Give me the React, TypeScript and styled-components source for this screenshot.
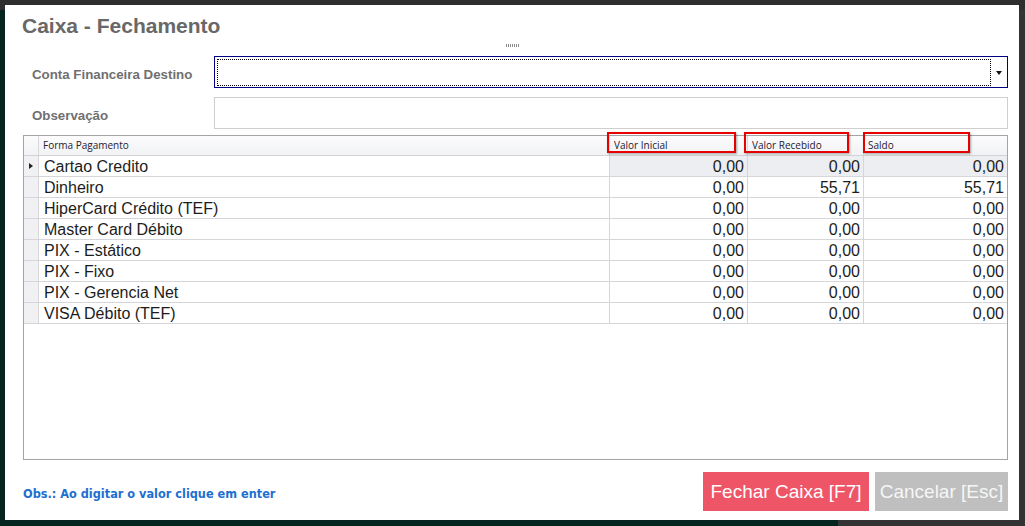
import React from "react";
import styled, { createGlobalStyle } from "styled-components";

type Row = {
  forma: string;
  inicial: string;
  recebido: string;
  saldo: string;
};

const rows: Row[] = [
  { forma: "Cartao Credito", inicial: "0,00", recebido: "0,00", saldo: "0,00" },
  { forma: "Dinheiro", inicial: "0,00", recebido: "55,71", saldo: "55,71" },
  { forma: "HiperCard Crédito (TEF)", inicial: "0,00", recebido: "0,00", saldo: "0,00" },
  { forma: "Master Card Débito", inicial: "0,00", recebido: "0,00", saldo: "0,00" },
  { forma: "PIX - Estático", inicial: "0,00", recebido: "0,00", saldo: "0,00" },
  { forma: "PIX - Fixo", inicial: "0,00", recebido: "0,00", saldo: "0,00" },
  { forma: "PIX - Gerencia Net", inicial: "0,00", recebido: "0,00", saldo: "0,00" },
  { forma: "VISA Débito (TEF)", inicial: "0,00", recebido: "0,00", saldo: "0,00" }
];

export default function App() {
  return (
    <>
      <GlobalStyle />
      <Dialog>
        <Title>Caixa - Fechamento</Title>
        <Gripper />
        <Form>
          <FieldRow>
            <Label>Conta Financeira Destino</Label>
            <Combo>
              <FocusRect />
              <Arrow />
            </Combo>
          </FieldRow>
          <FieldRow>
            <Label>Observação</Label>
            <TextBox />
          </FieldRow>
        </Form>
        <Grid>
          <HeaderRow>
            <HeaderCell />
            <HeaderCell>Forma Pagamento</HeaderCell>
            <HeaderCell>
              Valor Inicial
              <Mark $left={-3} $width={129} />
            </HeaderCell>
            <HeaderCell>
              Valor Recebido
              <Mark $left={-4} $width={105} />
            </HeaderCell>
            <HeaderCell>
              Saldo
              <Mark $left={-1} $width={107} />
            </HeaderCell>
          </HeaderRow>
          {rows.map((r, i) => (
            <DataRow key={r.forma}>
              <Indicator>{i === 0 && <Caret />}</Indicator>
              <Cell>{r.forma}</Cell>
              <NumCell $selected={i === 0}>{r.inicial}</NumCell>
              <NumCell $selected={i === 0}>{r.recebido}</NumCell>
              <NumCell $selected={i === 0}>{r.saldo}</NumCell>
            </DataRow>
          ))}
        </Grid>
        <Footer>
          <Note>Obs.: Ao digitar o valor clique em enter</Note>
          <Buttons>
            <ActionButton $variant="primary">Fechar Caixa [F7]</ActionButton>
            <ActionButton $variant="muted">Cancelar [Esc]</ActionButton>
          </Buttons>
        </Footer>
      </Dialog>
    </>
  );
}

const GlobalStyle = createGlobalStyle`
  html, body {
    margin: 0;
    padding: 0;
    height: 100%;
    overflow: hidden;
  }
  body {
    font-family: "Liberation Sans", Arial, sans-serif;
    background:
      linear-gradient(#2e2e2e, #2e2e2e) top left / 100% 10px no-repeat,
      linear-gradient(to right, #06241f 838px, #333333 838px);
  }
  #root {
    padding: 5px 6px 6px 5px;
  }
`;

const Dialog = styled.div`
  width: 1014px;
  height: 515px;
  box-sizing: border-box;
  background: #ffffff;
  display: flex;
  flex-direction: column;
  padding: 0 11px 0 18px;
`;

const Title = styled.div`
  margin: 9px 0 0 -1px;
  font-size: 21px;
  line-height: 24px;
  font-weight: bold;
  color: #686868;
`;

/* the little dotted size grip under the title */
const Gripper = styled.div`
  align-self: center;
  margin: 6px 0 0 -6px;
  width: 13px;
  height: 3px;
  background: repeating-linear-gradient(
    to right,
    #8c8c8c 0 1px,
    transparent 1px 2px
  );
`;

const Form = styled.div`
  margin-top: 9px;
  display: flex;
  flex-direction: column;
  gap: 9px;
  padding-left: 9px;
`;

const FieldRow = styled.div`
  display: flex;
  align-items: center;
  height: 32px;
`;

const Label = styled.div`
  width: 182px;
  padding-top: 5px;
  font-size: 13.3px;
  font-weight: bold;
  color: #707070;
`;

const Combo = styled.div`
  position: relative;
  flex: 1;
  height: 32px;
  box-sizing: border-box;
  border: 1px solid #000080;
  padding: 2px 16px 1px 2px;
  display: flex;
  align-items: stretch;
`;

const FocusRect = styled.div`
  flex: 1;
  border: 1px dotted #000000;
`;

const Arrow = styled.div`
  position: absolute;
  right: 5px;
  top: 14px;
  width: 0;
  height: 0;
  border-left: 3px solid transparent;
  border-right: 3px solid transparent;
  border-top: 4px solid #111111;
`;

const TextBox = styled.div`
  flex: 1;
  height: 32px;
  box-sizing: border-box;
  border: 1px solid #cfcfcf;
`;

const Grid = styled.div`
  margin-top: 6px;
  height: 325px;
  box-sizing: border-box;
  border: 1px solid #a3a3a8;
  display: flex;
  flex-direction: column;
`;

const columns = "15px 571px 138px 116px 1fr";

const HeaderRow = styled.div`
  display: grid;
  grid-template-columns: ${columns};
  height: 20px;
  box-sizing: border-box;
  border-bottom: 1px solid #d2d2d6;
  background: linear-gradient(#fcfcfd, #f1f2f4);
`;

const HeaderCell = styled.div`
  position: relative;
  border-right: 1px solid #d8d8dc;
  padding: 2px 0 0 4px;
  font-family: "Open Sans", "DejaVu Sans", sans-serif;
  font-size: 10px;
  line-height: 14px;
  color: #1e2030;
  white-space: nowrap;
  &:last-child {
    border-right: none;
  }
`;

const Mark = styled.div<{ $left: number; $width: number }>`
  position: absolute;
  top: -4px;
  left: ${(p) => p.$left}px;
  width: ${(p) => p.$width}px;
  height: 21px;
  box-sizing: border-box;
  border: 2px solid #e60000;
  box-shadow: 1px 1px 2px rgba(0, 0, 0, 0.35);
`;

const DataRow = styled.div`
  display: grid;
  grid-template-columns: ${columns};
  height: 21px;
  box-sizing: border-box;
  border-bottom: 1px solid #d6d6da;
`;

const Indicator = styled.div`
  background: #f1f1f4;
  border-right: 1px solid #d6d6da;
  display: flex;
  align-items: center;
  justify-content: center;
`;

const Caret = styled.div`
  width: 0;
  height: 0;
  border-top: 3px solid transparent;
  border-bottom: 3px solid transparent;
  border-left: 4px solid #222222;
`;

const Cell = styled.div`
  border-right: 1px solid #d6d6da;
  padding: 1px 0 0 5px;
  font-size: 16px;
  line-height: 19px;
  color: #1c1c1c;
  white-space: nowrap;
`;

const NumCell = styled(Cell)<{ $selected?: boolean }>`
  padding: 1px 3px 0 0;
  text-align: right;
  background: ${(p) => (p.$selected ? "#eceef1" : "transparent")};
  &:last-child {
    border-right: none;
  }
`;

const Footer = styled.div`
  margin-top: 12px;
  display: flex;
  align-items: center;
  justify-content: space-between;
`;

const Note = styled.div`
  margin-top: 4px;
  font-family: "DejaVu Sans Condensed", "DejaVu Sans", sans-serif;
  font-weight: bold;
  font-size: 12.6px;
  color: #1d6fd0;
`;

const Buttons = styled.div`
  display: flex;
  gap: 6px;
`;

const ActionButton = styled.div<{ $variant: "primary" | "muted" }>`
  height: 39px;
  display: flex;
  align-items: center;
  justify-content: center;
  box-sizing: border-box;
  font-size: 19px;
  color: ${(p) => (p.$variant === "primary" ? "#ffffff" : "#f6f6f6")};
  background: ${(p) => (p.$variant === "primary" ? "#ee5566" : "#bfbfbf")};
  width: ${(p) => (p.$variant === "primary" ? "166px" : "133px")};
`;
